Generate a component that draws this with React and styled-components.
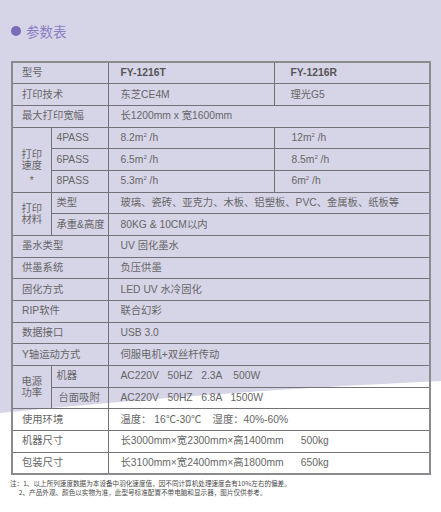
import React from "react";
import styled, { createGlobalStyle } from "styled-components";

const Global = createGlobalStyle`
  html, body { margin: 0; padding: 0; background: #ffffff; }
  body { font-family: "Liberation Sans", "Noto Sans CJK SC", sans-serif; }
`;

const Page = styled.div`
  position: relative;
  width: 441px;
  height: 512px;
  overflow: hidden;
  background: #d6d4e7;
`;

const Backdrop = styled.svg`
  position: absolute;
  left: 0;
  top: 0;
  z-index: 0;
`;

const Content = styled.div`
  position: relative;
  z-index: 1;
  display: flex;
  flex-direction: column;
  padding: 22px 12px 0 11px;
`;

const Heading = styled.div`
  display: flex;
  align-items: center;
  gap: 5px;
  height: 18px;
`;

const Dot = styled.span`
  width: 10px;
  height: 10px;
  border-radius: 50%;
  background: #7a6cb6;
`;

const HeadingText = styled.span`
  font-family: "Noto Sans CJK SC", sans-serif;
  font-size: 13.5px;
  color: #8a7fc2;
`;

const Table = styled.table`
  margin-top: 21px;
  width: 418px;
  table-layout: fixed;
  border-collapse: collapse;
  border: 2px solid #8a8a8f;
  font-size: 10.3px;
  color: #666666;
`;

const Row = styled.tr`
  height: 21.68px;
`;

const Cell = styled.td`
  border: 1px solid #727277;
  padding: 0 0 0 ${(p) => p.$pad ?? 12}px;
  white-space: pre;
  vertical-align: middle;
  font-weight: ${(p) => (p.$bold ? 700 : 400)};
  color: ${(p) => (p.$bold ? "#555" : "#666")};
  line-height: 12px;
`;

const GroupCell = styled.td`
  border: 1px solid #727277;
  padding: 0;
  text-align: center;
  vertical-align: middle;
  color: #666;
`;

const GroupStack = styled.div`
  display: flex;
  flex-direction: column;
  align-items: center;
  line-height: 11px;
`;

const Star = styled.span`
  margin-top: 4px;
  margin-bottom: -15px;
`;

const Notes = styled.div`
  margin-top: 4px;
  margin-left: -1px;
  font-family: "Noto Sans CJK SC", sans-serif;
  font-size: 6.6px;
  line-height: 9px;
  color: #4a4a4a;
  white-space: pre;
`;

const Sup = styled.sup`
  font-size: 6px;
  line-height: 0;
  vertical-align: 4px;
`;

const Area = ({ v }) => (
  <>
    {v}m<Sup>2</Sup> /h
  </>
);

const Group = ({ lines, star }) => (
  <GroupStack>
    {lines.map((l) => (
      <span key={l}>{l}</span>
    ))}
    {star && <Star>*</Star>}
  </GroupStack>
);

export default function App() {
  return (
    <>
      <Global />
      <Page>
        <Backdrop width="441" height="512" viewBox="0 0 441 512">
          <path d="M0,413 Q220,391 441,381 L441,512 L0,512 Z" fill="#ffffff" />
        </Backdrop>
        <Content>
          <Heading>
            <Dot />
            <HeadingText>参数表</HeadingText>
          </Heading>
          <Table>
            <colgroup>
              <col style={{ width: 39 }} />
              <col style={{ width: 57 }} />
              <col style={{ width: 166 }} />
              <col style={{ width: 156 }} />
            </colgroup>
            <tbody>
              <Row>
                <Cell colSpan={2} $pad={9}>型号</Cell>
                <Cell $bold>FY-1216T</Cell>
                <Cell $bold $pad={16}>FY-1216R</Cell>
              </Row>
              <Row>
                <Cell colSpan={2} $pad={9}>打印技术</Cell>
                <Cell>东芝CE4M</Cell>
                <Cell $pad={16}>理光G5</Cell>
              </Row>
              <Row>
                <Cell colSpan={2} $pad={9}>最大打印宽幅</Cell>
                <Cell colSpan={2}>长1200mm x 宽1600mm</Cell>
              </Row>
              <Row>
                <GroupCell rowSpan={3}>
                  <Group lines={["打印", "速度"]} star />
                </GroupCell>
                <Cell $pad={5}>4PASS</Cell>
                <Cell><Area v="8.2" /></Cell>
                <Cell $pad={17}><Area v="12" /></Cell>
              </Row>
              <Row>
                <Cell $pad={5}>6PASS</Cell>
                <Cell><Area v="6.5" /></Cell>
                <Cell $pad={17}><Area v="8.5" /></Cell>
              </Row>
              <Row>
                <Cell $pad={5}>8PASS</Cell>
                <Cell><Area v="5.3" /></Cell>
                <Cell $pad={17}><Area v="6" /></Cell>
              </Row>
              <Row>
                <GroupCell rowSpan={2}>
                  <Group lines={["打印", "材料"]} />
                </GroupCell>
                <Cell $pad={5}>类型</Cell>
                <Cell colSpan={2}>玻璃、瓷砖、亚克力、木板、铝塑板、PVC、金属板、纸板等</Cell>
              </Row>
              <Row>
                <Cell $pad={5}>承重&amp;高度</Cell>
                <Cell colSpan={2}>80KG &amp; 10CM以内</Cell>
              </Row>
              <Row>
                <Cell colSpan={2} $pad={9}>墨水类型</Cell>
                <Cell colSpan={2}>UV 固化墨水</Cell>
              </Row>
              <Row>
                <Cell colSpan={2} $pad={9}>供墨系统</Cell>
                <Cell colSpan={2}>负压供墨</Cell>
              </Row>
              <Row>
                <Cell colSpan={2} $pad={9}>固化方式</Cell>
                <Cell colSpan={2}>LED UV 水冷固化</Cell>
              </Row>
              <Row>
                <Cell colSpan={2} $pad={9}>RIP软件</Cell>
                <Cell colSpan={2}>联合幻彩</Cell>
              </Row>
              <Row>
                <Cell colSpan={2} $pad={9}>数据接口</Cell>
                <Cell colSpan={2}>USB 3.0</Cell>
              </Row>
              <Row>
                <Cell colSpan={2} $pad={9}>Y轴运动方式</Cell>
                <Cell colSpan={2}>伺服电机+双丝杆传动</Cell>
              </Row>
              <Row>
                <GroupCell rowSpan={2}>
                  <Group lines={["电源", "功率"]} />
                </GroupCell>
                <Cell $pad={5}>机器</Cell>
                <Cell colSpan={2}>{"AC220V   50HZ   2.3A    500W"}</Cell>
              </Row>
              <Row>
                <Cell $pad={7}>台面吸附</Cell>
                <Cell colSpan={2}>{"AC220V   50HZ   6.8A   1500W"}</Cell>
              </Row>
              <Row>
                <Cell colSpan={2} $pad={9}>使用环境</Cell>
                <Cell colSpan={2}>{"温度： 16℃-30℃    湿度：40%-60%"}</Cell>
              </Row>
              <Row>
                <Cell colSpan={2} $pad={9}>机器尺寸</Cell>
                <Cell colSpan={2}>{"长3000mm×宽2300mm×高1400mm      500kg"}</Cell>
              </Row>
              <Row>
                <Cell colSpan={2} $pad={9}>包装尺寸</Cell>
                <Cell colSpan={2}>{"长3100mm×宽2400mm×高1800mm      650kg"}</Cell>
              </Row>
            </tbody>
          </Table>
          <Notes>
            {"注：1、以上所列速度数据为本设备中羽化速度值，因不同计算机处理速度会有10%左右的偏差。\n      2、产品外观、颜色以实物为准，此型号标准配置不带电脑和显示器，图片仅供参考。"}
          </Notes>
        </Content>
      </Page>
    </>
  );
}
